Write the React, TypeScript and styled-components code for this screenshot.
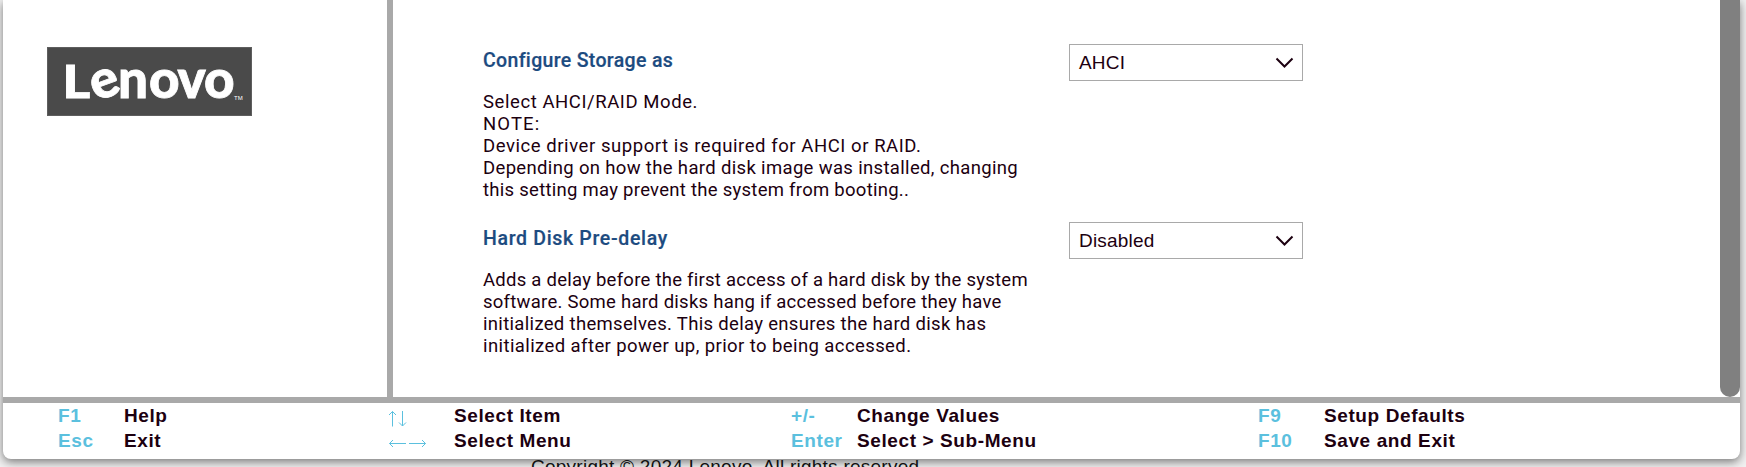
import React from "react";
import styled, { createGlobalStyle } from "styled-components";

const GlobalStyle = createGlobalStyle`
  * { box-sizing: border-box; }
  body {
    margin: 0;
    background: #f1f1f1;
    overflow: hidden;
    font-family: "Liberation Sans", Arial, sans-serif;
    color: #1c0010;
  }
`;

const Page = styled.div`
  height: 467px;
  padding: 0 6px 0 3px;
  overflow: hidden;
`;

const Panel = styled.main`
  height: 459px;
  background: #fff;
  border-radius: 0 0 8px 8px;
  box-shadow: 0 3px 10px rgba(0, 0, 0, 0.5);
`;

const Body = styled.div`
  display: flex;
  height: 397px;
`;

const Sidebar = styled.aside`
  width: 390px;
  padding: 47px 0 0 44px;
  border-right: 6px solid #a9a9a9;
`;

const Logo = styled.svg`
  display: block;
  width: 205px;
  height: 69px;
`;

const Settings = styled.section`
  flex: 1;
  padding: 44px 0 0 90px;
`;

const Setting = styled.div`
  display: flex;
  height: 178px;
`;

const Info = styled.div`
  width: 586px;
`;

const Title = styled.h2<{ $spacing: number }>`
  height: 28px;
  margin: 0 0 19px;
  padding-top: 3px;
  font: 500 19.5px/27px Roboto, sans-serif;
  -webkit-text-stroke: 0.2px #1c4b80;
  letter-spacing: ${(p) => p.$spacing}px;
  color: #1c4b80;
`;

const Line = styled.span<{ $spacing: number }>`
  display: block;
  font: 400 18.5px/22px Roboto, sans-serif;
  letter-spacing: ${(p) => p.$spacing}px;
  white-space: nowrap;
`;

const Select = styled.button`
  display: flex;
  align-items: center;
  justify-content: space-between;
  width: 234px;
  height: 37px;
  padding: 0 8px 0 9px;
  border: 1px solid #a9a9a9;
  background: #fff;
  color: #1c0010;
  font: 19px "Liberation Sans", Arial, sans-serif;
  letter-spacing: 0.2px;
`;

const Scrollbar = styled.div`
  width: 20px;
  background: #808080;
  border-radius: 0 0 10px 10px;
`;

const Footer = styled.footer`
  display: flex;
  height: 62px;
  padding: 0 0 0 55px;
  border-top: 6px solid #a9a9a9;
  font-weight: 700;
  font-size: 19px;
  line-height: 25px;
  letter-spacing: 0.6px;
  white-space: nowrap;
`;

const KeyGroup = styled.div<{ $width: number }>`
  width: ${(p) => p.$width}px;
`;

const KeyRow = styled.div`
  display: flex;
  height: 25px;
`;

const Key = styled.span`
  width: 66px;
  color: #5bc0de;
`;

const ArrowIcon = styled.svg`
  display: block;
  margin-top: 7px;
  fill: none;
  stroke: #5bc0de;
  stroke-width: 1;
`;

const Copyright = styled.div`
  padding-left: 528px;
  font-size: 19px;
  line-height: 16px;
  letter-spacing: 0.25px;
  color: #111;
`;

const UpDown = () => (
  <ArrowIcon width="20" height="18" viewBox="0 0 20 18">
    <path d="M4.500 16.500V1.500M1 5 4.500 1.500 8 5M14.500 1v15M11 12.500l3.500 3.500 3.500-3.500" />
  </ArrowIcon>
);

const LeftRight = () => (
  <ArrowIcon width="40" height="18" viewBox="0 0 40 18">
    <path d="M18 8.500H1.500M5 5 1.500 8.500 5 12M21 8.500H37.500M34 5l3.500 3.500L34 12" />
  </ArrowIcon>
);

const Chevron = () => (
  <svg width="19" height="12" viewBox="0 0 19 12" fill="none" stroke="#1c0010" strokeWidth="2">
    <path d="M1.500 1.500 9.500 9.500 17.500 1.500" />
  </svg>
);

type Item = { title: string; spacing: number; value: string; lines: [string, number][] };

const settings: Item[] = [
  {
    title: "Configure Storage as",
    spacing: 0.33,
    value: "AHCI",
    lines: [
      ["Select AHCI/RAID Mode.", 0.57],
      ["NOTE:", 1.1],
      ["Device driver support is required for AHCI or RAID.", 0.56],
      ["Depending on how the hard disk image was installed, changing", 0.34],
      ["this setting may prevent the system from booting..", 0.27],
    ],
  },
  {
    title: "Hard Disk Pre-delay",
    spacing: 0.67,
    value: "Disabled",
    lines: [
      ["Adds a delay before the first access of a hard disk by the system", 0.25],
      ["software. Some hard disks hang if accessed before they have", 0.26],
      ["initialized themselves. This delay ensures the hard disk has", 0.32],
      ["initialized after power up, prior to being accessed.", 0.41],
    ],
  },
];

const keyGroups: { width: number; rows: [React.ReactNode, string][] }[] = [
  { width: 330, rows: [["F1", "Help"], ["Esc", "Exit"]] },
  { width: 403, rows: [[<UpDown />, "Select Item"], [<LeftRight />, "Select Menu"]] },
  { width: 467, rows: [["+/-", "Change Values"], ["Enter", "Select > Sub-Menu"]] },
  { width: 300, rows: [["F9", "Setup Defaults"], ["F10", "Save and Exit"]] },
];

export default function App() {
  return (
    <Page>
      <GlobalStyle />
      <Panel>
        <Body>
          <Sidebar>
            <Logo viewBox="0 0 205 69" fill="#fff" fontFamily="Lato, sans-serif" fontWeight="900">
              <rect x="0.5" y="0.5" width="204" height="68" fill="#4a4a4a" stroke="#5e5e5e" />
              <g stroke="#fff" strokeWidth="0.8">
                <text transform="translate(15.500 50.500) scale(1.14 1)" fontSize="46.500">L</text>
                <text x="43.500" y="50.500" fontSize="53" transform="rotate(-20 57.500 37)">e</text>
                <text x="71 102 130.500 157" y="50.500" fontSize="53">novo</text>
              </g>
              <text x="187" y="53" fontSize="6" fontFamily="Liberation Sans" fontWeight="400">TM</text>
            </Logo>
          </Sidebar>
          <Settings>
            {settings.map((s) => (
              <Setting key={s.title}>
                <Info>
                  <Title $spacing={s.spacing}>{s.title}</Title>
                  {s.lines.map(([text, spacing]) => (
                    <Line key={text} $spacing={spacing}>{text}</Line>
                  ))}
                </Info>
                <Select>
                  {s.value}
                  <Chevron />
                </Select>
              </Setting>
            ))}
          </Settings>
          <Scrollbar />
        </Body>
        <Footer>
          {keyGroups.map((g) => (
            <KeyGroup key={g.width} $width={g.width}>
              {g.rows.map(([k, label]) => (
                <KeyRow key={label}>
                  <Key>{k}</Key>
                  {label}
                </KeyRow>
              ))}
            </KeyGroup>
          ))}
        </Footer>
      </Panel>
      <Copyright>Copyright © 2024 Lenovo. All rights reserved.</Copyright>
    </Page>
  );
}
